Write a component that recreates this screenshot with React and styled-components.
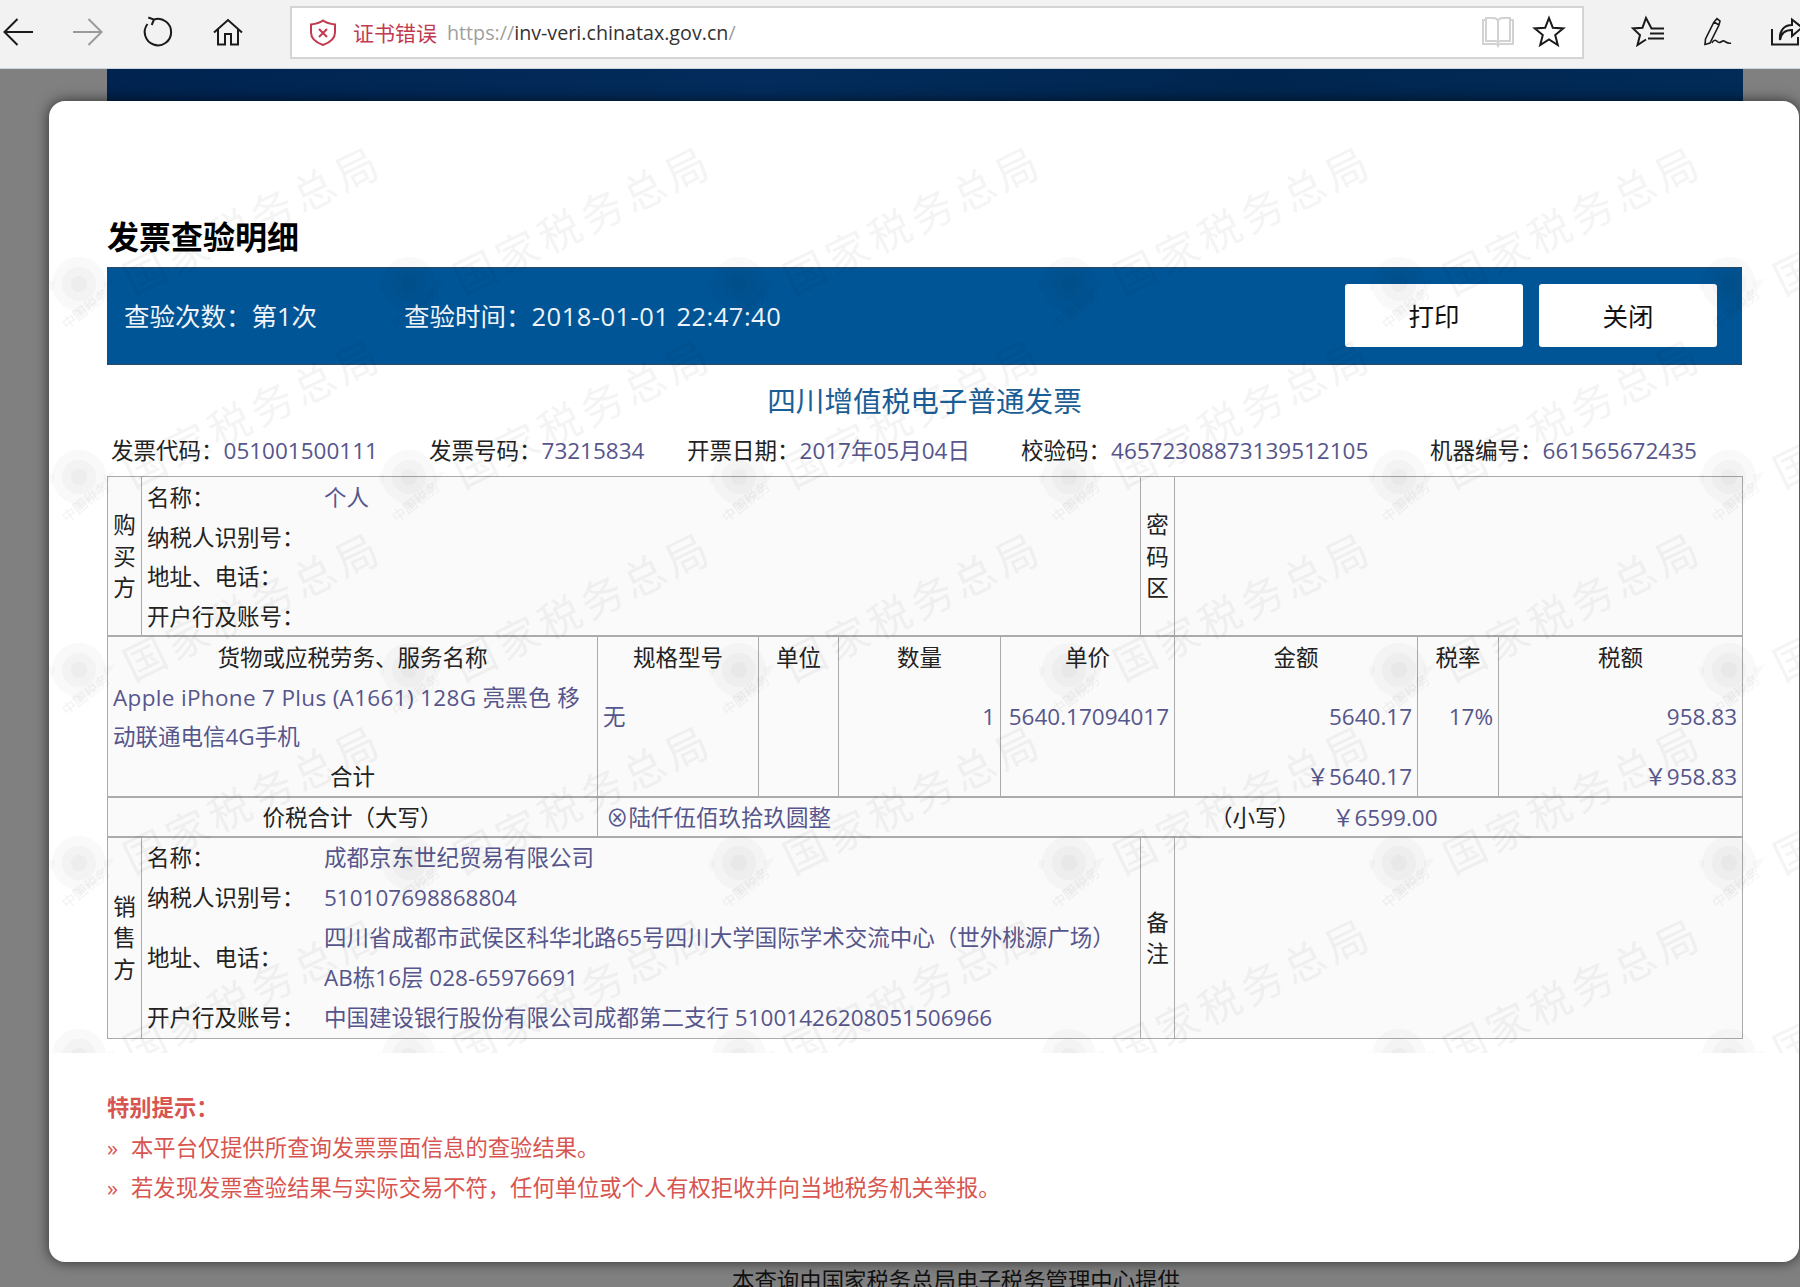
import styled, {createGlobalStyle} from "styled-components"

const FONT = `"Open Sans", "Noto Sans CJK SC", sans-serif`
const VALUE = "#56568c"
const LINE = "#ababab"
const RED = "#d8554f"

export default function App() {
  return (
    <>
      <GlobalStyle />
      <Toolbar>
        <NavGroup>
          <Icon width="30" height="28" viewBox="0 0 30 28"><path d="M30 14H2M14.500 1 1.500 14l13 13" /></Icon>
          <Icon width="30" height="28" viewBox="0 0 30 28" $muted><path d="M0 14h28M15.500 1l13 13-13 13" /></Icon>
          <Icon width="30" height="30" viewBox="0 0 30 30">
            <path d="M11 2.500A13.200 13.200 0 1 1 4.500 7M5.300 .5 11 2.500 8.700 8" />
          </Icon>
          <Icon width="30" height="28" viewBox="0 0 30 28">
            <path d="M1 14.500 15 2l14 12.500M5 11.500V26.500H12V16H18V26.500H25V11.500" />
          </Icon>
        </NavGroup>
        <AddressBar>
          <Shield width="26" height="27" viewBox="0 0 26 27">
            <path d="M13 1.500C17 4.500 21 5 25 5.500V13.500C25 19.500 20 23.500 13 26 6 23.500 1 19.500 1 13.500V5.500C5 5 9 4.500 13 1.500Z" />
            <path d="M9 10l8 8M17 10l-8 8" />
          </Shield>
          <CertError>证书错误</CertError>
          <Url><Dim>https://</Dim>inv-veri.chinatax.gov.cn<Dim>/</Dim></Url>
          <AddressTools>
            <Icon width="32" height="30" viewBox="0 0 32 30" $faint>
              <path d="M4 3H1V27H14C15 27 15.500 28 16 29 16.500 28 17 27 18 27H31V3H28" />
              <path d="M4 24V1H11C14 1 16 2 16 5 16 2 18 1 21 1H28V24H18C17 24 16.500 25 16 26 15.500 25 15 24 14 24ZM16 5V26" />
            </Icon>
            <Icon width="30" height="30" viewBox="0 0 30 30">
              <polygon points="15,1 18.800,10.700 29.300,11.400 21.200,18 23.800,28.100 15,22.500 6.200,28.100 8.800,18 .7,11.400 11.200,10.700" />
            </Icon>
          </AddressTools>
        </AddressBar>
        <ActionGroup>
          <Icon width="32" height="30" viewBox="0 0 32 30">
            <path d="M32 11.500H19.500L14 1 10.500 10.700 1 11.400 8 18 5.500 28 14 22.500M18 16.500H32M16 21.500H32" />
          </Icon>
          <Icon width="27" height="28" viewBox="0 0 27 28" $thin>
            <path d="M10 4 13 .7 16 3 15 7 6 25 1 26.500 1.500 21ZM10 4 15 7M8 25C10 21 12 22 14 24 16 26 18 22 20 23 22 24 24 26 27 25" />
          </Icon>
          <Icon width="32" height="28" viewBox="0 0 32 28">
            <path d="M1 11V26.500H27V19M9 22C10 15 15 12 21 12V18L31 9.500 21 1.500V7C13 7 8 13 9 22Z" />
          </Icon>
        </ActionGroup>
      </Toolbar>

      <Stage>
        <Banner />
        <Footer>本查询由国家税务总局电子税务管理中心提供</Footer>

        <Modal>
          <Title>发票查验明细</Title>
          <InfoBar>
            <BarText $width="280px">查验次数：第1次</BarText>
            <BarText>查验时间：<BarTime>2018-01-01 22:47:40</BarTime></BarText>
            <BarButtons>
              <BarButton>打印</BarButton>
              <BarButton>关闭</BarButton>
            </BarButtons>
          </InfoBar>

          <InvoiceName>四川增值税电子普通发票</InvoiceName>

          <MetaRow>
            <span>发票代码：<Value>051001500111</Value></span>
            <span>发票号码：<Value>73215834</Value></span>
            <span>开票日期：<Value>2017年05月04日</Value></span>
            <span>校验码：<Value>46572308873139512105</Value></span>
            <span>机器编号：<Value>661565672435</Value></span>
          </MetaRow>

          <Invoice>
            <colgroup>
              {[34, 456, 161, 80, 162, 140, 34, 243, 81, 244].map((w, i) => <col key={i} style={{width: w}} />)}
            </colgroup>
            <tbody>
              <tr>
                <SideCell>购<br />买<br />方</SideCell>
                <Cell colSpan={5}>
                  <PartyGrid $lift>
                    <span>名称：</span><Value>个人</Value>
                    <span>纳税人识别号：</span><span />
                    <span>地址、电话：</span><span />
                    <span>开户行及账号：</span><span />
                  </PartyGrid>
                </Cell>
                <SideCell>密<br />码<br />区</SideCell>
                <Cell colSpan={3} />
              </tr>

              <HeadRow>
                <Cell colSpan={2} $center>货物或应税劳务、服务名称</Cell>
                <Cell $center>规格型号</Cell>
                <Cell $center>单位</Cell>
                <Cell $center>数量</Cell>
                <Cell colSpan={2} $center>单价</Cell>
                <Cell $center>金额</Cell>
                <Cell $center>税率</Cell>
                <Cell $center>税额</Cell>
              </HeadRow>
              <ItemRow>
                <Cell colSpan={2} $value>
                  <ItemName>Apple iPhone 7 Plus (A1661) 128G 亮黑色 移</ItemName><br />动联通电信4G手机
                </Cell>
                <Cell $value>无</Cell>
                <Cell />
                <Cell $value $right>1</Cell>
                <Cell colSpan={2} $value $right>5640.17094017</Cell>
                <Cell $value $right>5640.17</Cell>
                <Cell $value $right>17%</Cell>
                <Cell $value $right>958.83</Cell>
              </ItemRow>
              <TotalRow>
                <Cell colSpan={2} $center>合计</Cell>
                <Cell />
                <Cell />
                <Cell />
                <Cell colSpan={2} />
                <Cell $value $right>￥5640.17</Cell>
                <Cell />
                <Cell $value $right>￥958.83</Cell>
              </TotalRow>

              <SumRow>
                <Cell colSpan={2} $center>价税合计（大写）</Cell>
                <Cell colSpan={8}>
                  <SumLine>
                    <Value>⊗陆仟伍佰玖拾玖圆整</Value>
                    <SmallLabel>（小写）</SmallLabel>
                    <Value>￥6599.00</Value>
                  </SumLine>
                </Cell>
              </SumRow>

              <tr>
                <SideCell>销<br />售<br />方</SideCell>
                <Cell colSpan={5}>
                  <PartyGrid $tall>
                    <span>名称：</span><Value>成都京东世纪贸易有限公司</Value>
                    <span>纳税人识别号：</span><Value>510107698868804</Value>
                    <span>地址、电话：</span>
                    <Value>四川省成都市武侯区科华北路65号四川大学国际学术交流中心（世外桃源广场）<br />AB栋16层 028-65976691</Value>
                    <span>开户行及账号：</span><Value>中国建设银行股份有限公司成都第二支行 51001426208051506966</Value>
                  </PartyGrid>
                </Cell>
                <SideCell>备<br />注</SideCell>
                <Cell colSpan={3} />
              </tr>
            </tbody>
          </Invoice>

          <Notice>
            <NoticeTitle>特别提示：</NoticeTitle>
            <NoticeLine>本平台仅提供所查询发票票面信息的查验结果。</NoticeLine>
            <NoticeLine>若发现发票查验结果与实际交易不符，任何单位或个人有权拒收并向当地税务机关举报。</NoticeLine>
          </Notice>

          <Watermark aria-hidden="true">
            <defs>
              <pattern id="tax-mark" x="0" y="0" width="330" height="193" patternUnits="userSpaceOnUse">
                <g transform="translate(30 146)">
                  <circle r="27" />
                  <circle r="17" />
                  <circle r="8" />
                  <path d="M-36 -6 -24 -2 -27 8ZM36 -6 24 -2 27 8ZM-8 26 0 34 8 26Z" />
                </g>
                <WatermarkText transform="translate(84 158) rotate(-26)">国家税务总局</WatermarkText>
                <WatermarkSign transform="translate(18 192) rotate(-38)">中国税务</WatermarkSign>
              </pattern>
            </defs>
            <rect width="100%" height="100%" fill="url(#tax-mark)" />
          </Watermark>
        </Modal>
      </Stage>
    </>
  )
}

// Styles
const GlobalStyle = createGlobalStyle`
  html, body {
    margin: 0;
    height: 1287px;
    overflow: hidden;
    background: #808080;
    font-family: ${FONT};
  }
`

const Toolbar = styled.header`
  display: flex;
  align-items: center;
  box-sizing: border-box;
  width: 1800px;
  height: 69px;
  padding: 0 0 4px 3px;
  background: #f2f2f2;
  border-bottom: 1px solid #c9d4de;
`

const NavGroup = styled.nav`
  display: flex;
  align-items: center;
  gap: 40px;
`

const Icon = styled.svg`
  flex: none;
  overflow: visible;
  fill: none;
  stroke: ${p => (p.$muted ? "#9a9a9a" : p.$faint ? "#d2d2d2" : "#1a1a1a")};
  stroke-width: ${p => (p.$thin ? 1.6 : 2)};
`

const AddressBar = styled.div`
  flex: none;
  display: flex;
  align-items: center;
  box-sizing: border-box;
  width: 1294px;
  height: 53px;
  margin-left: 47px;
  padding: 0 18px 0 18px;
  background: #fff;
  border: 2px solid #d4d4d4;
`

const Shield = styled.svg`
  flex: none;
  fill: none;
  stroke: #c23a50;
  stroke-width: 2;
`

const CertError = styled.span`
  margin-left: 17px;
  font-size: 21px;
  color: #c23a50;
`

const Url = styled.span`
  margin-left: 10px;
  font-size: 19.700px;
  color: #333;
`

const Dim = styled.span`
  color: #a0a0a0;
`

const AddressTools = styled.div`
  display: flex;
  align-items: center;
  gap: 20px;
  margin-left: auto;
`

const ActionGroup = styled.div`
  flex: none;
  display: flex;
  align-items: center;
  gap: 40px;
  margin-left: 48px;
`

const Stage = styled.main`
  position: relative;
  height: 1218px;
  overflow: hidden;
  background: #808080;
`

const Banner = styled.div`
  height: 32px;
  margin: 0 57px 0 107px;
  background: linear-gradient(100deg, #00234f, #032c5c 40%, #00264f 70%, #022b58);
`

const Footer = styled.p`
  margin: 1160px 0 0;
  padding-left: 112px;
  text-align: center;
  font-size: 22.400px;
  line-height: 40px;
  color: #111;
`

const Modal = styled.section`
  position: absolute;
  top: 32px;
  left: 49px;
  right: 1px;
  box-sizing: border-box;
  height: 1161px;
  padding: 114px 57px 0 58px;
  background: #fff;
  border-radius: 16px;
  box-shadow: 0 0 14px rgba(0, 0, 0, 0.65);
`

const Title = styled.h1`
  margin: 0 0 8px;
  font-size: 32px;
  line-height: 44px;
  font-weight: 700;
  color: #000;
`

const InfoBar = styled.div`
  display: flex;
  align-items: center;
  box-sizing: border-box;
  height: 98px;
  padding: 0 24px 1px 16px;
  background: #005596;
  border: 1px solid #2a4a68;
  color: #eef4fa;
`

const BarText = styled.span`
  flex: none;
  width: ${p => p.$width || "auto"};
  padding-bottom: 2px;
  font-size: 25.500px;
`

const BarTime = styled.span`
  letter-spacing: 0.48px;
`

const BarButtons = styled.div`
  display: flex;
  gap: 16px;
  margin-left: auto;
`

const BarButton = styled.button`
  width: 178px;
  height: 63px;
  padding: 0 0 2px;
  border: 0;
  border-radius: 3px;
  background: #fff;
  font-family: ${FONT};
  font-size: 25.500px;
  color: #111;
`

const InvoiceName = styled.h2`
  margin: 16px 0 0;
  text-align: center;
  font-size: 28.600px;
  line-height: 40px;
  font-weight: 400;
  color: #1b5e96;
`

const MetaRow = styled.div`
  display: grid;
  grid-template-columns: 318px 258px 334px 409px auto;
  height: 40px;
  margin: 10px 0 5px;
  padding-left: 4px;
  font-size: 22.500px;
  line-height: 40px;
  color: #222;
  white-space: nowrap;
`

const Value = styled.span`
  color: ${VALUE};
`

const Invoice = styled.table`
  width: 1635px;
  table-layout: fixed;
  border-collapse: collapse;
  background: #fafafa;
  font-size: 22.500px;
  line-height: 39.500px;
  color: #222;
  white-space: nowrap;
`

const Cell = styled.td`
  padding: 0 5px;
  border: 1px solid ${LINE};
  text-align: ${p => (p.$center ? "center" : p.$right ? "right" : "left")};
  color: ${p => (p.$value ? VALUE : "inherit")};
`

const SideCell = styled.td`
  padding: 1px 0 0;
  border: 1px solid ${LINE};
  text-align: center;
  line-height: 31.500px;
`

const HeadRow = styled.tr`
  td {
    padding-top: 1px;
    border-top: 2px solid ${LINE};
    border-bottom: none;
  }
`

const ItemRow = styled.tr`
  td {
    border-top: none;
    border-bottom: none;
  }
`

const ItemName = styled.span`
  letter-spacing: 0.33px;
`

const TotalRow = styled.tr`
  td {
    border-top: none;
    border-bottom: 2px solid ${LINE};
  }
`

const SumRow = styled.tr`
  td {
    padding-top: 1.500px;
    border-bottom: 2px solid ${LINE};
    line-height: 36px;
  }
`

const SumLine = styled.div`
  display: grid;
  grid-template-columns: 604px 122px auto;
  padding-left: 3px;
`

const SmallLabel = styled.span`
  color: #222;
`

const PartyGrid = styled.div`
  display: grid;
  grid-template-columns: 177px auto;
  align-items: center;
  line-height: ${p => (p.$tall ? "40px" : "inherit")};
  padding-top: ${p => (p.$lift ? "1px" : 0)};
  margin-bottom: ${p => (p.$lift ? "-1px" : 0)};
`

const Notice = styled.div`
  margin-top: 49px;
  font-size: 22.300px;
  line-height: 40px;
  color: ${RED};
`

const NoticeTitle = styled.div`
  font-weight: 700;
`

const NoticeLine = styled.div`
  display: flex;
  gap: 13px;

  &::before {
    content: "»";
  }
`

const Watermark = styled.svg`
  position: absolute;
  top: 37px;
  left: 0;
  width: 100%;
  height: 915px;
  pointer-events: none;
  filter: blur(0.6px);

  circle, path {
    fill: #000;
    fill-opacity: 0.022;
  }
`

const WatermarkText = styled.text`
  font-family: "Noto Sans CJK SC", sans-serif;
  font-size: 42px;
  letter-spacing: 5px;
  fill: #000;
  fill-opacity: 0.045;
`

const WatermarkSign = styled.text`
  font-family: "Noto Sans CJK SC", sans-serif;
  font-size: 14px;
  fill: #000;
  fill-opacity: 0.05;
`
